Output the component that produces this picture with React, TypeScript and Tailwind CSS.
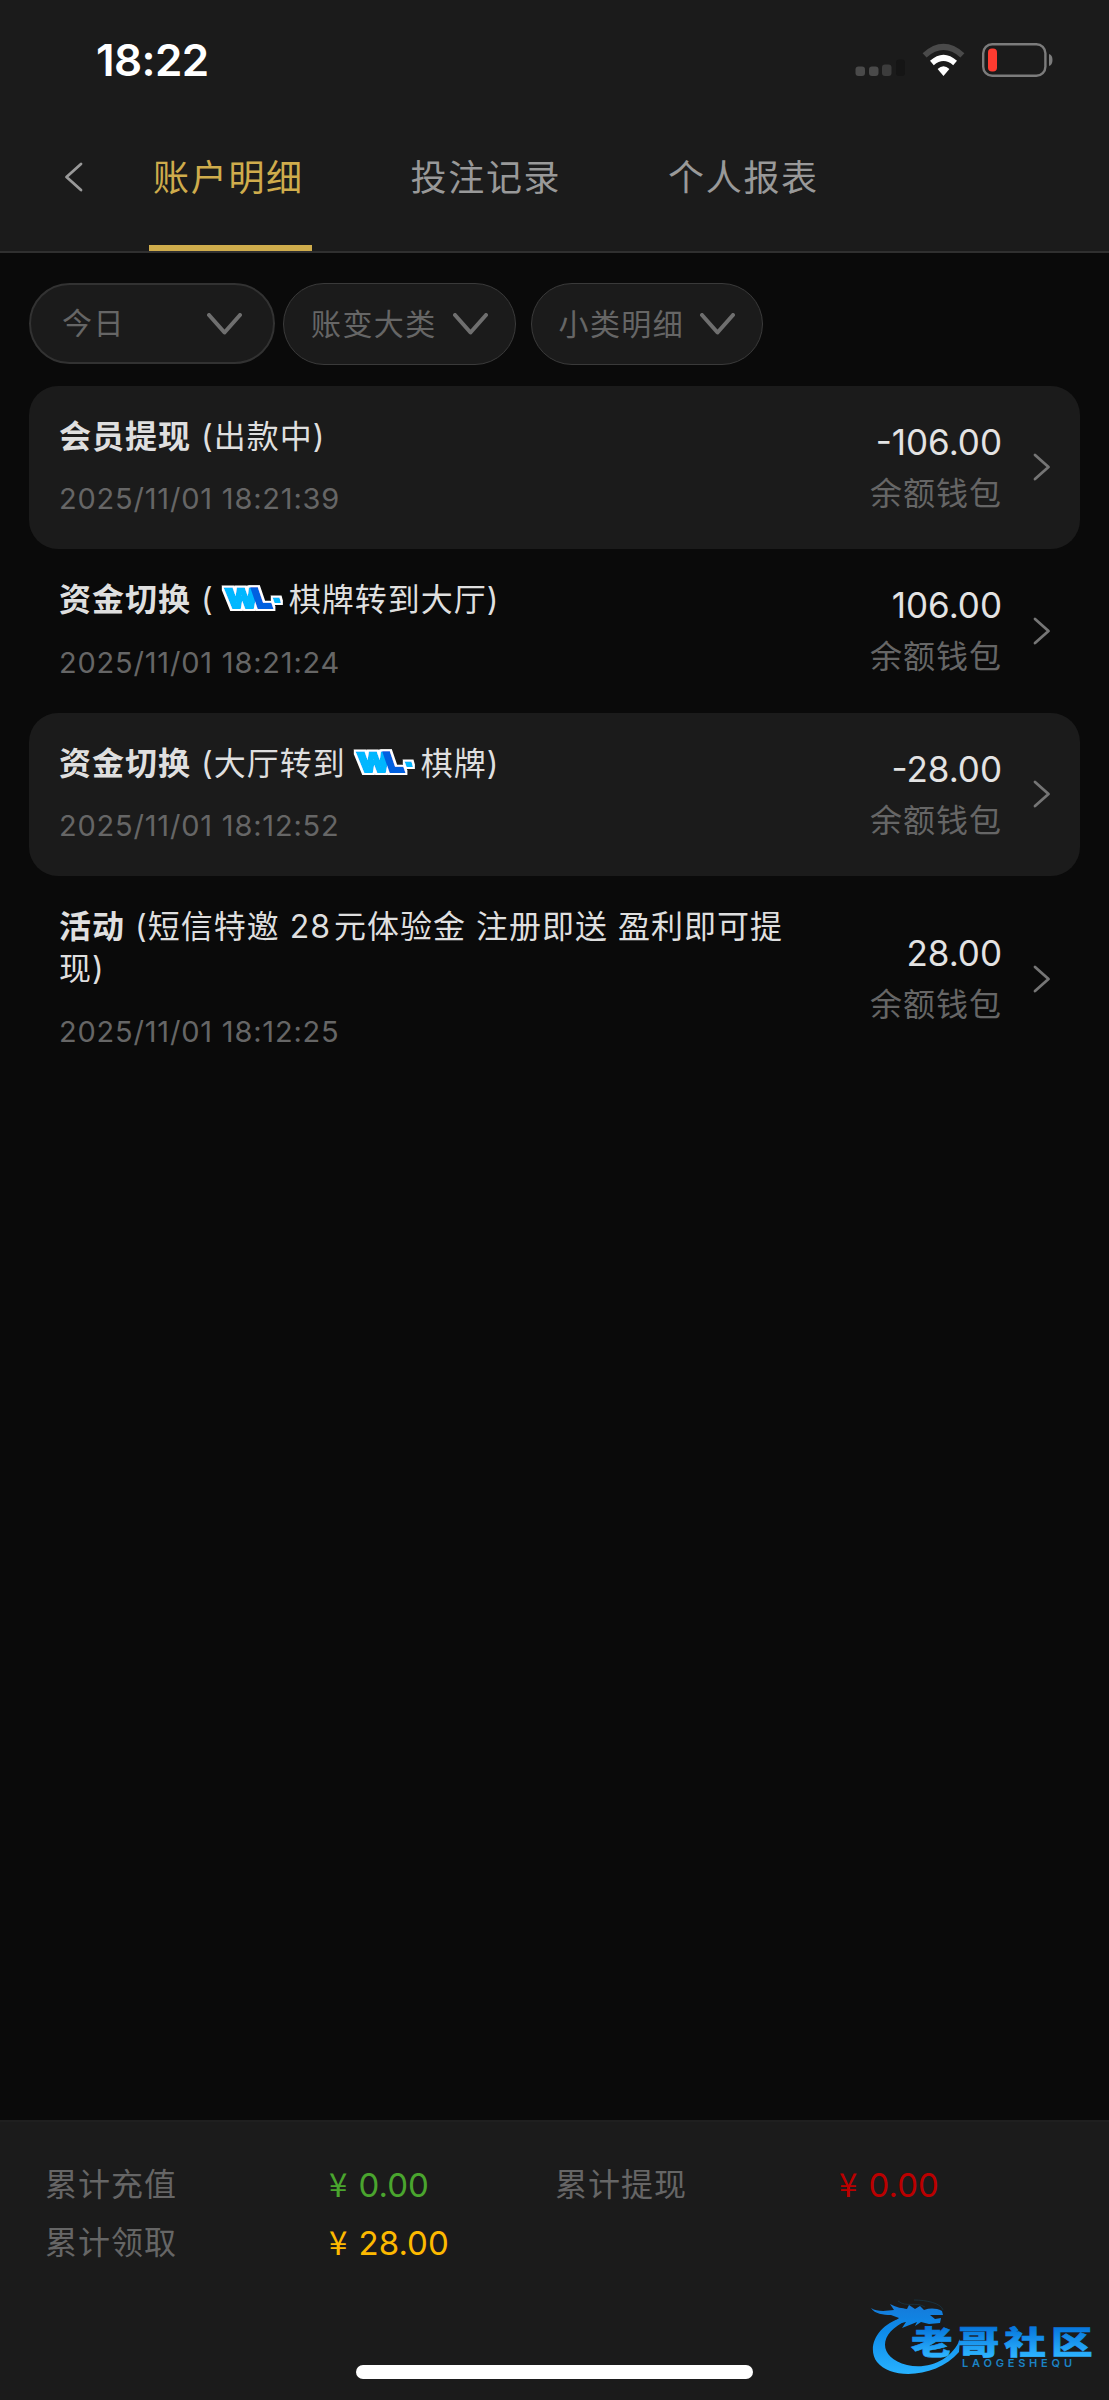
import { useState } from 'react'
import type { ReactNode } from 'react'

interface RecordItem {
  id: number
  type: string
  detail: ReactNode
  time: string
  amount: string
}

interface SummaryItem {
  label: string
  value: string
  color: string
}

const tabs = ['账户明细', '投注记录', '个人报表']

function WlLogo() {
  return (
    <svg className="mr-[6px] ml-[8px] inline-block h-[30px] w-[61px] overflow-visible align-[-3px]" viewBox="0 0 61 30">
      <defs>
        <filter id="outline" x="-10%" y="-20%" width="120%" height="140%">
          <feMorphology in="SourceAlpha" operator="dilate" radius="2" result="grown" />
          <feFlood floodColor="#fff" />
          <feComposite in2="grown" operator="in" />
          <feMerge>
            <feMergeNode />
            <feMergeNode in="SourceGraphic" />
          </feMerge>
        </filter>
      </defs>
      <g fontFamily="Inter, sans-serif" fontWeight="900" fontSize="27" filter="url(#outline)">
        <text transform="translate(4.5 23.5) skewX(6)" textLength="34" lengthAdjust="spacingAndGlyphs" fill="#00b7ff" stroke="#00b7ff" strokeWidth="2">W</text>
        <text transform="translate(35 23.5) skewX(19)" textLength="17" lengthAdjust="spacingAndGlyphs" fill="#0560e0" stroke="#0560e0" strokeWidth="2">L</text>
        <path d="M50.500 13.500h7l1.500 5.500h-6.500z" fill="#00b7ff" />
      </g>
    </svg>
  )
}

const records: RecordItem[] = [
  { id: 1, type: '会员提现', detail: '(出款中)', time: '2025/11/01 18:21:39', amount: '-106.00' },
  { id: 2, type: '资金切换', detail: <>(<WlLogo />棋牌转到大厅)</>, time: '2025/11/01 18:21:24', amount: '106.00' },
  { id: 3, type: '资金切换', detail: <>(大厅转到<WlLogo />棋牌)</>, time: '2025/11/01 18:12:52', amount: '-28.00' },
  {
    id: 4,
    type: '活动',
    detail: <>(短信特邀 28<span className="ml-[3px]">元体验金</span> 注册即送 盈利即可提现)</>,
    time: '2025/11/01 18:12:25',
    amount: '28.00',
  },
]

const summary: SummaryItem[] = [
  { label: '累计充值', value: '0.00', color: 'text-[#4aa52e]' },
  { label: '累计提现', value: '0.00', color: 'text-[#bb0000]' },
  { label: '累计领取', value: '28.00', color: 'text-[#fdb900]' },
]

function StatusBar() {
  return (
    <div className="flex h-[120px] items-center justify-between pl-[96px] pr-[56px]">
      <span className="text-[44px] leading-none font-semibold tracking-[-0.600px] text-white">18:22</span>
      <div className="flex items-center">
        <svg className="w-[51px] h-[34px] mr-[16px]" viewBox="0 0 51 34">
          <rect x="0.500" y="23.500" width="9.500" height="9.500" rx="3" fill="#4a4a4a" />
          <rect x="14" y="23.500" width="9.500" height="9.500" rx="3" fill="#4a4a4a" />
          <rect x="27" y="21.500" width="9.500" height="11.500" rx="3" fill="#3c3c3c" />
          <rect x="41" y="16.500" width="9" height="16.500" rx="3" fill="#151515" />
        </svg>
        <svg className="w-[43px] h-[34px] mr-[17px]" viewBox="0 0 43 34">
          <path d="M0.600 10.200Q21.500 -8.600 42.400 10.200L38.400 14.400Q21.500 -0.200 4.600 14.400Z" fill="#4a4a4a" />
          <path d="M8 17.800Q21.500 5.600 35 17.800L31.200 22.200Q21.500 13.800 11.800 22.200Z" fill="#fff" />
          <path d="M15.600 26Q21.500 20.600 27.400 26L21.500 33Z" fill="#fff" />
        </svg>
        <svg className="w-[71px] h-[34px]" viewBox="0 0 71 34">
          <rect x="1.200" y="1.200" width="62.200" height="31.600" rx="9" fill="none" stroke="#7c7c7c" strokeWidth="2.400" />
          <rect x="6" y="5.500" width="9" height="23" rx="4" fill="#ff3b30" />
          <path d="M67 11Q70.500 12 70.500 17T67 23Z" fill="#7c7c7c" />
        </svg>
      </div>
    </div>
  )
}

function DownArrow() {
  return (
    <svg className="w-[35px] h-[22px]" viewBox="0 0 35 22" fill="none" stroke="#6f6f6f" strokeWidth="4" strokeLinecap="round" strokeLinejoin="round">
      <path d="M2 2L17.500 19.500L33 2" />
    </svg>
  )
}

function RecordRow({ item, shaded }: { item: RecordItem; shaded: boolean }) {
  return (
    <div className={`flex items-center rounded-[29px] py-[30px] pl-[30px] pr-[29px] ${shaded ? 'bg-[#1b1b1b]' : ''}`}>
      <div className="w-[730px]">
        <div className="text-[32px] leading-[42px] tracking-[1px] text-[#dfdfdf]">
          <span className="font-bold">{item.type}</span> {item.detail}
        </div>
        <div className="mt-[21.500px] h-10 text-[29px] leading-10 tracking-[0.800px] text-[#666]">{item.time}</div>
      </div>
      <div className="ml-auto pt-px text-right">
        <div className="text-[35px] leading-[51px] text-[#e3e3e3]">{item.amount}</div>
        <div className="text-[32px] leading-[51px] tracking-[1px] text-[#666]">余额钱包</div>
      </div>
      <svg className="ml-[31px] w-[18px] h-[28px]" viewBox="0 0 18 28" fill="none" stroke="#757575" strokeWidth="2.800" strokeLinecap="round" strokeLinejoin="round">
        <path d="M2 2L15.500 14L2 26" />
      </svg>
    </div>
  )
}

function Watermark() {
  return (
    <svg className="absolute left-[865px] top-[2295px] w-[234px] h-[85px]" viewBox="0 0 234 85">
      <defs>
        <linearGradient id="blue" gradientUnits="userSpaceOnUse" x1="0" y1="8" x2="0" y2="78">
          <stop offset="0" stopColor="#1679d8" />
          <stop offset="0.400" stopColor="#0d8bea" />
          <stop offset="1" stopColor="#27b1ff" />
        </linearGradient>
        <linearGradient id="blueText" x1="0" y1="0" x2="0" y2="1">
          <stop offset="0.250" stopColor="#0879de" />
          <stop offset="0.850" stopColor="#2db4ff" />
        </linearGradient>
      </defs>
      <g fill="url(#blue)">
        <path d="M37 23C13 29 1 52 12 67C27 86 73 82 94 57L95 44C87 65 63 75 42 70C13 63 12 38 43 25Z" />
        <path d="M6 13C12 17 21 16 29 15L25 9C32 13 37 13 42 14L44 10L50 14L55 11L59 15C65 13 71 13 77 16L78 20L65 20L70 24L76 23L75 28L64 29L56 27L50 31L52 27L37 33L41 27L26 30L34 23L26 20C18 20 10 19 6 13Z" />
      </g>
      <g fill="none" stroke="#15506f" strokeWidth="0.800" opacity="0.500">
        <path d="M33 6C42 13 50 6 60 12M49 5C61 5 76 8 78 15" />
      </g>
      <text
        transform="translate(46 59) scale(1.300 1)"
        fontFamily="'Noto Sans CJK SC', sans-serif"
        fontWeight="900"
        fontSize="32"
        letterSpacing="3.900"
        fill="url(#blueText)"
        stroke="url(#blueText)"
        strokeWidth="0.600"
      >
        老哥社区
      </text>
      <text x="97" y="72" fontFamily="Inter, sans-serif" fontWeight="600" fontSize="11" textLength="110" fill="#1c83c4">
        LAOGESHEQU
      </text>
    </svg>
  )
}

export default function App() {
  const [activeTab, setActiveTab] = useState(0)

  return (
    <div className="relative flex h-[2400px] w-[1109px] flex-col overflow-hidden bg-[#0a0a0a] font-['Inter','Noto_Sans_CJK_SC',sans-serif]">
      <header className="h-[253px] shrink-0 border-b-2 border-[#303030] bg-[#1b1b1b]">
        <StatusBar />
        <nav className="flex h-[131px] pl-[64px]">
          <button className="flex w-[85px] items-center pb-[18px]">
            <svg className="w-[19px] h-[30px]" viewBox="0 0 19 30" fill="none" stroke="#999" strokeWidth="2.800" strokeLinecap="round" strokeLinejoin="round">
              <path d="M17 2L2.500 15L17 28" />
            </svg>
          </button>
          <div className="flex gap-[94.500px]">
            {tabs.map((tab, index) => (
              <button
                key={tab}
                onClick={() => setActiveTab(index)}
                className={`w-[163px] border-b-[6px] pb-[10px] pl-[4px] text-left text-[36px] tracking-[1.700px] whitespace-nowrap ${
                  index === activeTab ? 'border-[#cfac4c] text-[#cfac4c]' : 'border-transparent text-[#999]'
                }`}
              >
                {tab}
              </button>
            ))}
          </div>
        </nav>
      </header>

      <main className="flex-1 px-[29px] pt-[30px]">
        <div className="flex text-[30px] tracking-[1.400px] text-[#666]">
          <button className="flex h-[81px] w-[246px] items-center justify-between rounded-full border-2 border-[#323232] bg-[#1b1b1b] pl-[31px] pr-[31px]">
            今日
            <DownArrow />
          </button>
          <button className="ml-[8px] flex h-[82px] w-[232.500px] items-center justify-between rounded-full border border-[#3a3a3a] bg-[#1b1b1b] pl-[27px] pr-[27px]">
            账变大类
            <DownArrow />
          </button>
          <button className="ml-[15px] flex h-[82px] w-[232.500px] items-center justify-between rounded-full border border-[#3a3a3a] bg-[#1b1b1b] pl-[27px] pr-[27px]">
            小类明细
            <DownArrow />
          </button>
        </div>
        <div className="mt-[20.500px]">
          {records.map((item, index) => (
            <RecordRow key={item.id} item={item} shaded={index % 2 === 0} />
          ))}
        </div>
      </main>

      <footer className="flex h-[280px] shrink-0 flex-col items-center justify-between border-t-2 border-[#1f1f1f] bg-[#1b1b1b] pt-[34px] pb-[21.500px]">
        <div className="grid w-full grid-cols-[510px_510px] pl-[45px]">
          {summary.map(item => (
            <div key={item.label} className="flex h-[58px] items-center">
              <span className="w-[284px] text-[32px] tracking-[1px] text-[#666]">{item.label}</span>
              <span className={`text-[33px] ${item.color}`}>
                <span className="mr-[2px] font-['Noto_Sans_CJK_SC',sans-serif]">¥</span> {item.value}
              </span>
            </div>
          ))}
        </div>
        <div className="h-[13.500px] w-[396.500px] rounded-full bg-white" />
      </footer>

      <Watermark />
    </div>
  )
}
